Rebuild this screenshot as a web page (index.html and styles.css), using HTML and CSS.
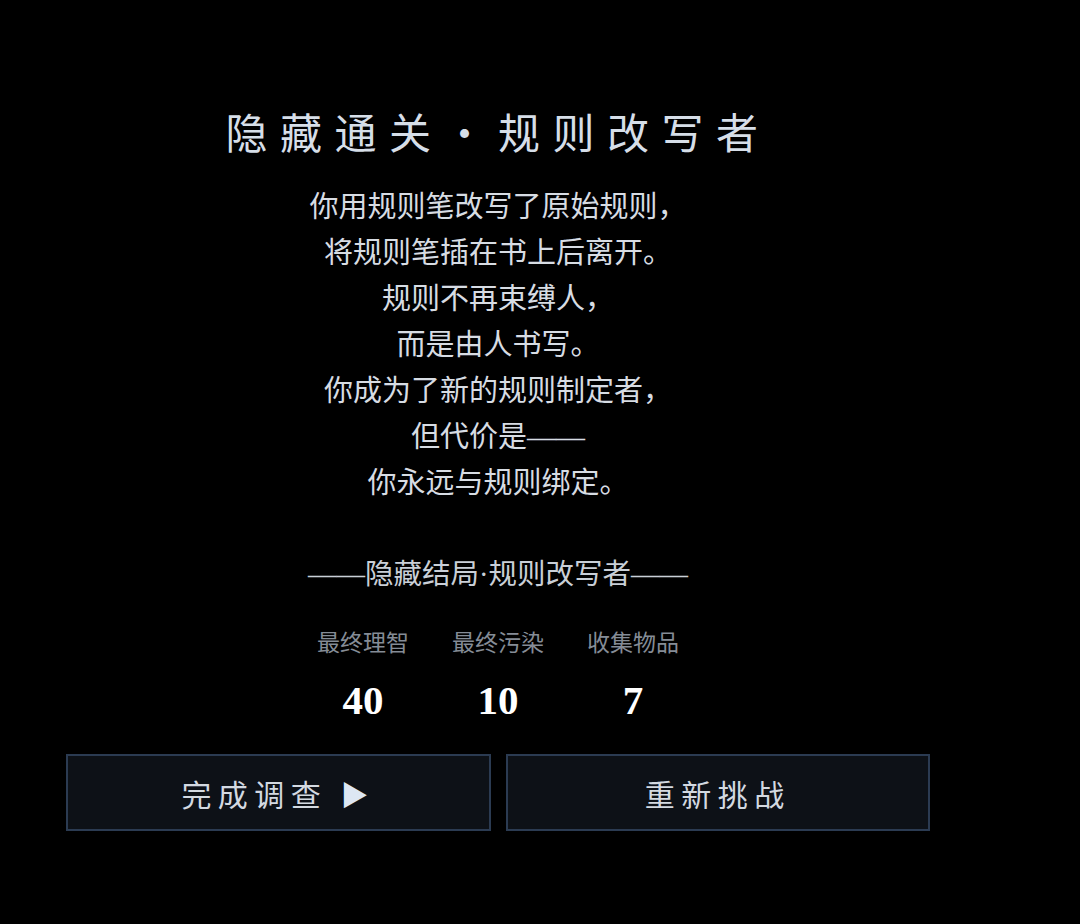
FILE: index.html
```html
<!DOCTYPE html>
<html lang="zh-CN">
<head>
<meta charset="utf-8">
<title>隐藏通关 · 规则改写者</title>
<link rel="stylesheet" href="styles.css">
</head>
<body>
<main class="wrap">
  <h1 class="title">隐藏通关・规则改写者</h1>
  <div class="story">
    <p>你用规则笔改写了原始规则，</p>
    <p>将规则笔插在书上后离开。</p>
    <p>规则不再束缚人，</p>
    <p>而是由人书写。</p>
    <p>你成为了新的规则制定者，</p>
    <p>但代价是——</p>
    <p>你永远与规则绑定。</p>
  </div>
  <div class="ending">——隐藏结局·规则改写者——</div>
  <div class="stats">
    <div class="stat"><div class="label">最终理智</div><div class="value">40</div></div>
    <div class="stat"><div class="label">最终污染</div><div class="value">10</div></div>
    <div class="stat"><div class="label">收集物品</div><div class="value">7</div></div>
  </div>
  <div class="actions">
    <button class="btn">完成调查 <span class="arrow">▶</span></button>
    <button class="btn">重新挑战</button>
  </div>
</main>
</body>
</html>
```
FILE: styles.css
```css
html, body {
  margin: 0;
  padding: 0;
  background: #000;
}
body {
  width: 1080px;
  height: 924px;
  overflow: hidden;
  font-family: "Liberation Serif", "Noto Sans CJK SC", serif;
  color: #d9dee5;
}
.wrap {
  width: 864px;
  margin-left: 66px;
  padding-top: 106px;
  display: flex;
  flex-direction: column;
  align-items: center;
}
.title {
  margin: 0;
  font-family: "Noto Sans CJK SC", sans-serif;
  font-weight: 400;
  font-size: 42px;
  line-height: 50px;
  letter-spacing: 12.5px;
  color: #d6dee8;
}
.story {
  margin-top: 28px;
  text-align: center;
  font-size: 29px;
  line-height: 46px;
  font-family: "Liberation Serif", "Noto Sans CJK SC", serif;
  font-weight: 400;
  color: #d7dce3;
}
.story p {
  margin: 0;
}
.ending {
  margin-top: 46px;
  font-size: 28.5px;
  line-height: 46px;
  color: #c9cfd7;
}
.stats {
  margin-top: 30px;
  display: grid;
  grid-template-columns: repeat(3, 92px);
  column-gap: 43px;
}
.stat {
  display: flex;
  flex-direction: column;
  align-items: center;
}
.label {
  font-size: 23px;
  line-height: 32px;
  color: #858c96;
  white-space: nowrap;
}
.value {
  margin-top: 16px;
  font-family: "Liberation Serif", serif;
  font-weight: 700;
  font-size: 41px;
  line-height: 48px;
  color: #ffffff;
}
.actions {
  margin-top: 30px;
  width: 100%;
  display: grid;
  grid-template-columns: 1fr 1fr;
  column-gap: 15px;
}
.btn {
  height: 77px;
  margin: 0;
  padding: 0;
  background: #0d1117;
  border: 2px solid #2b3b52;
  color: #d3d9e1;
  font-family: "Noto Sans CJK SC", sans-serif;
  font-weight: 400;
  font-size: 30px;
  letter-spacing: 6.5px;
  line-height: 1;
  cursor: pointer;
}
.arrow {
  color: #dde7f3;
  font-size: 28px;
}
```
